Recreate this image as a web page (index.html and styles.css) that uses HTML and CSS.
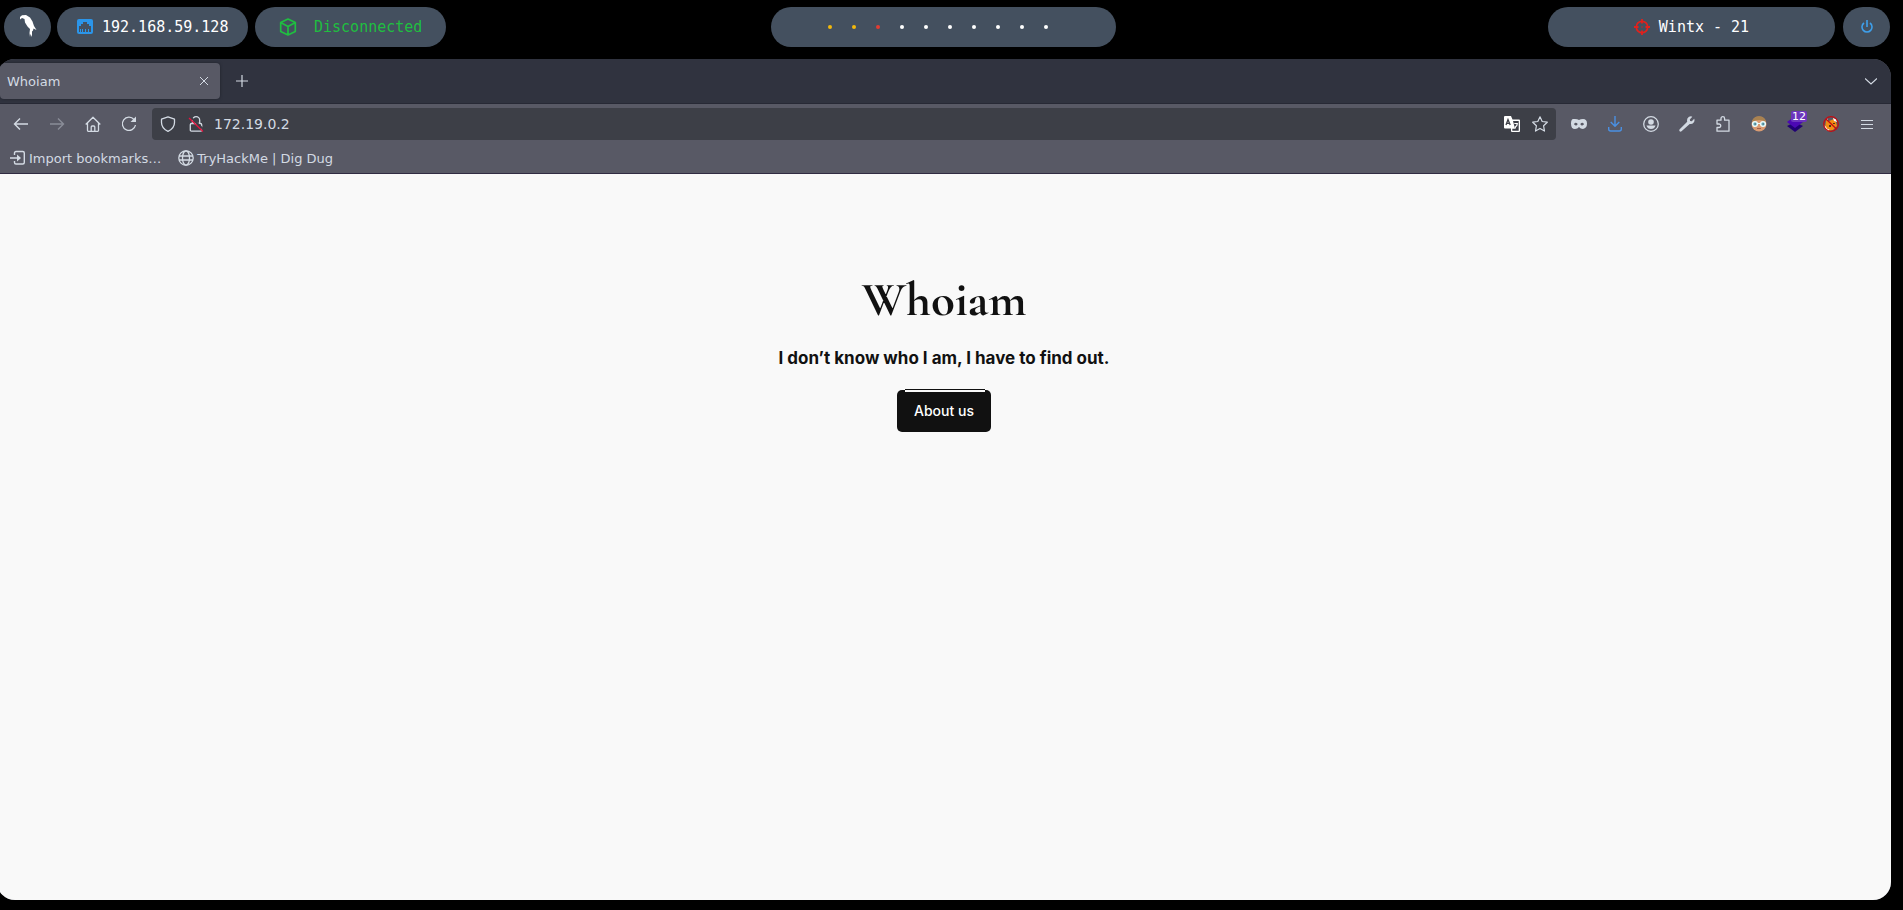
FILE: index.html
```html
<!DOCTYPE html>
<html lang="en">
<head>
<meta charset="utf-8">
<title>Whoiam</title>
<link rel="stylesheet" href="styles.css">
</head>
<body>
<header class="panel">
  <div class="panel-group">
    <button class="pill pill-round" aria-label="Menu">
      <svg width="18" height="26" viewBox="0 0 18 26"><path fill="#fff" d="M1 5.500V3l2-1.700L7 1l4 2.500 2.500 4 1.500 4.500 2.500 4-3-1.500-.5 2-1 1v5.500l-1.500-3-.5 3-.5-4 .5-4-2.500-2.500L6 8.500 5.500 5 3 4z"/></svg>
    </button>
    <div class="pill pill-left">
      <svg width="16" height="16" viewBox="0 0 16 16"><rect width="16" height="15" rx="2" fill="#2b95e9"/><path fill="#44505f" d="M2 13V7h2V5h2V3h4v2h2v2h2v6h-2v-3h-1v3H9v-3H8v3H6v-3H5v3H4v-3H3v3z"/></svg>
      <span>192.168.59.128</span>
    </div>
    <div class="pill pill-left pill-vpn">
      <svg width="18" height="18" viewBox="0 0 18 18" fill="none" stroke="currentColor" stroke-width="1.700" stroke-linejoin="round"><path d="M9 1l7.300 3.500v9L9 17l-7.300-3.500v-9zM1.700 4.500L9 8.500l7.300-4M9 8.500V17"/></svg>
      <span>Disconnected</span>
    </div>
  </div>
  <div class="pill pill-dots">
    <i class="dot dot-yellow"></i><i class="dot dot-yellow"></i><i class="dot dot-red"></i><i class="dot"></i><i class="dot"></i><i class="dot"></i><i class="dot"></i><i class="dot"></i><i class="dot"></i><i class="dot"></i>
  </div>
  <div class="panel-group panel-end">
    <div class="pill pill-target">
      <svg width="16" height="16" viewBox="0 0 16 16" fill="none" stroke="#e2211c"><circle cx="8" cy="8" r="5.700" stroke-width="1.700"/><path stroke-width="1.800" d="M8 0v4.500M8 11.500V16M0 8h4.500M11.500 8H16"/><circle cx="8" cy="8" r=".3"/></svg>
      <span>Wintx - 21</span>
    </div>
    <button class="pill pill-round" aria-label="Power">
      <svg width="12" height="14" viewBox="0 0 12 14" fill="none" stroke="#3e9fea" stroke-width="1.600"><path d="M6 0v7M3 3a5 5 0 1 0 6 0"/></svg>
    </button>
  </div>
</header>

<div class="window">
  <div class="tabbar">
    <div class="tab">
      <span>Whoiam</span>
      <button class="icon-btn tab-close" aria-label="Close tab"><svg width="8" height="8" viewBox="0 0 8 8" fill="none" stroke="currentColor"><path d="M0 0l8 8M8 0L0 8"/></svg></button>
    </div>
    <button class="icon-btn" aria-label="New tab"><svg width="12" height="12" viewBox="0 0 12 12" fill="none" stroke="currentColor" stroke-width="1.200"><path d="M6 0v12M0 6h12"/></svg></button>
    <button class="icon-btn tab-list" aria-label="List all tabs"><svg width="12" height="7" viewBox="0 0 12 7" fill="none" stroke="currentColor" stroke-width="1.200"><path d="M0 .5l6 5.500 6-5.500"/></svg></button>
  </div>

  <nav class="toolbar">
    <button class="icon-btn" aria-label="Back"><svg width="16" height="16" viewBox="0 0 16 16" fill="none" stroke="currentColor" stroke-width="1.400"><path d="M15 8H2M7 2.500L1.500 8 7 13.500"/></svg></button>
    <button class="icon-btn faded" aria-label="Forward"><svg width="16" height="16" viewBox="0 0 16 16" fill="none" stroke="currentColor" stroke-width="1.400"><path d="M1 8h13M9 2.500L14.500 8 9 13.500"/></svg></button>
    <button class="icon-btn" aria-label="Home"><svg width="16" height="16" viewBox="0 0 16 16" fill="none" stroke="currentColor" stroke-width="1.300" stroke-linejoin="round"><path d="M.7 8.500L8 1.300l7.300 7.200M2.500 7v7.500q0 .8.800.8h9.400q.8 0 .8-.8V7M6.200 15v-4q0-1 1-1h1.600q1 0 1 1v4"/></svg></button>
    <button class="icon-btn" aria-label="Reload"><svg width="16" height="16" viewBox="0 0 16 16"><path fill="none" stroke="currentColor" stroke-width="1.300" d="M13 3.500A6.600 6.600 0 1 0 14.500 9"/><path fill="currentColor" d="M15 .5V6H9.500z"/></svg></button>
    <div class="urlbar">
      <svg class="shield" width="16" height="16" viewBox="0 0 16 16" fill="none" stroke="currentColor" stroke-width="1.300" stroke-linejoin="round"><path d="M8 .9l6.500 2.300v3.300q0 5.800-6.500 8.800-6.500-3-6.500-8.800V3.200z"/></svg>
      <svg class="lock" width="16" height="16" viewBox="0 0 16 16" fill="none" stroke="currentColor" stroke-width="1.300"><path d="M4.500 7V4.300a3.600 3.600 0 0 1 7.200 0V7M3.500 7.500h9q1.200 0 1.200 1.200v5.300q0 1.200-1.200 1.200h-9q-1.200 0-1.200-1.200V8.700q0-1.200 1.200-1.200z"/><path stroke="#3d3f47" stroke-width="2" d="M2 .5L16 14"/><path stroke="#e5133f" d="M1 2l14 13.500"/></svg>
      <input class="address" type="text" value="172.19.0.2" aria-label="Address">
      <button class="icon-btn url-btn" aria-label="Translate"><svg width="16" height="16" viewBox="0 0 16 16"><path fill="#fff" d="M1 0h6l1.500 3.500H15q1 0 1 1V15q0 1-1 1H8q-1 0-1-1v-2.500H1q-1 0-1-1V1q0-1 1-1z"/><path fill="#3d3f47" d="M9 5h5.700v9.700H8.300v-2H11z"/><path fill="none" stroke="#3d3f47" stroke-width="1.300" d="M2 9l2-5.500L6.200 9M2.800 7.300h2.500"/><path fill="none" stroke="#fff" stroke-width="1.200" d="M10.300 7.500h3q0 2.500-2 3.500v1.500"/></svg></button>
      <button class="icon-btn url-btn" aria-label="Bookmark this page"><svg width="16" height="16" viewBox="0 0 16 16" fill="none" stroke="currentColor" stroke-width="1.200" stroke-linejoin="round"><path d="M8 .8l2.200 4.700 5.100.7-3.700 3.600.9 5.300L8 12.600l-4.500 2.500.9-5.300L.7 6.200l5.100-.7z"/></svg></button>
    </div>
    <button class="icon-btn" aria-label="Private mask"><svg width="16" height="10" viewBox="0 0 16 10"><path fill="currentColor" fill-rule="evenodd" d="M4 0q2.500 0 4 1 1.500-1 4-1 4 0 4 4.500T12 10q-2.500 0-4-2-1.500 2-4 2-4 0-4-5.500T4 0zM3 5.200q1 1.300 2 1.300t1.700-1.500q-1-1.200-2-1.200T3 5.200zm6.300-.2q.7 1.500 1.700 1.500t2-1.300q-.7-1.400-1.700-1.400t-2 1.200z"/></svg></button>
    <button class="icon-btn download" aria-label="Downloads"><svg width="14" height="16" viewBox="0 0 14 16" fill="none" stroke="currentColor" stroke-width="1.400"><path d="M7 0v10M2.700 6L7 10.300 11.300 6M.7 11v2q0 2 2 2h8.600q2 0 2-2v-2"/></svg></button>
    <button class="icon-btn" aria-label="Account"><svg width="16" height="16" viewBox="0 0 16 16"><circle cx="8" cy="8" r="7.300" fill="none" stroke="currentColor" stroke-width="1.300"/><circle cx="8" cy="6" r="2.800" fill="currentColor"/><path fill="currentColor" d="M3.500 9.500h9q-1 3.500-4.500 3.500T3.500 9.500z"/></svg></button>
    <button class="icon-btn" aria-label="Developer tools"><svg width="16" height="16" viewBox="0 0 16 16"><path fill="currentColor" d="M10 .8Q12 0 13.300.7L10.800 3.500l.3 1.600 1.700.2 2.400-2.500q.8 1.900-.5 3.700-1.500 2-4 1.500L2.500 15.300q-1 .7-1.900-.1-.7-.9.100-1.900L8.200 5.700Q7.400 2.200 10 .8z"/></svg></button>
    <button class="icon-btn" aria-label="Extensions"><svg width="16" height="16" viewBox="0 0 16 16" fill="none" stroke="currentColor" stroke-width="1.300" stroke-linejoin="round"><path d="M2 7V4.200h4V2.500a1.800 1.800 0 0 1 3.600 0v1.700H14v11H2V11.500h2A1.700 1.700 0 0 0 4 8H2z"/></svg></button>
    <button class="icon-btn" aria-label="Profile extension"><svg width="16" height="16" viewBox="0 0 16 16"><circle cx="8" cy="8" r="7.500" fill="#d99b72"/><path fill="#a98250" d="M.8 6Q2 .2 8 .2T15.200 6q-3-2-7-2t-7.400 2z"/><g fill="#75bac5" stroke="#eefafa" stroke-width="1.300"><circle cx="4" cy="8" r="2.400"/><circle cx="12" cy="8" r="2.400"/></g><path stroke="#eefafa" d="M6 7.500h4"/><path stroke="#315568" d="M3.500 8h1.500M11.500 8H13"/><path stroke="#a55c49" d="M6 12.500h4"/></svg></button>
    <button class="icon-btn" aria-label="Layers extension, 12"><svg width="16" height="16" viewBox="0 0 16 16"><path fill="#210075" d="M0 10l8-4 8 4-8 6z"/><path fill="#4c08b5" d="M0 6l8-6 8 6-8 6z"/></svg><span class="count">12</span></button>
    <button class="icon-btn" aria-label="Proxy extension"><svg width="16" height="16" viewBox="0 0 16 16"><path fill="#f28c13" d="M3 4l3 1 5-2 2 3 1 4-4 4-5 1-3-3z"/><path fill="#fff" d="M10 2l3 1 1 3-3-1zM1.500 9l3 4 2 .5-1 1.500q-3-1-4-4zM2 4l2-2 1 2z"/><path fill="#54301c" d="M6 9h2v2H6zM10 7h2v1h-2z"/><g fill="none" stroke="#c40c12" stroke-width="1.300"><circle cx="8" cy="8" r="7.300"/><path d="M3 3l10.500 10"/></g></svg></button>
    <button class="icon-btn" aria-label="Application menu"><svg width="12" height="11" viewBox="0 0 12 11" stroke="currentColor" stroke-width="1.200"><path d="M0 1.500h12M0 5.500h12M0 9.500h12"/></svg></button>
  </nav>

  <div class="bookmarks">
    <a class="bookmark" href="#"><svg width="16" height="16" viewBox="0 0 16 16" fill="none" stroke="currentColor" stroke-width="1.400"><path d="M4.500 5V3q0-1.500 1.500-1.500h6.800q1.500 0 1.500 1.500v9.500q0 1.500-1.500 1.500H6q-1.500 0-1.500-1.500V11M0 8h9"/><path fill="currentColor" stroke="none" d="M7 4.500l4 3.500-4 3.500z"/></svg><span>Import bookmarks…</span></a>
    <a class="bookmark" href="#"><svg width="16" height="16" viewBox="0 0 16 16" fill="none" stroke="currentColor" stroke-width="1.300"><circle cx="8" cy="8" r="7.200"/><ellipse cx="8" cy="8" rx="3.500" ry="7.200"/><path d="M1 6h14M1 10h14"/></svg><span>TryHackMe | Dig Dug</span></a>
  </div>

  <main class="page">
    <h1>Whoiam</h1>
    <p class="tagline">I don’t know who I am, I have to find out.</p>
    <a class="about" href="#">About us</a>
  </main>
</div>
</body>
</html>
```
FILE: styles.css
```css
* { box-sizing: border-box; }

body {
  margin: 0;
  min-height: 100vh;
  display: flex;
  flex-direction: column;
  background: #000;
  overflow-x: hidden;
  font-family: "DejaVu Sans", sans-serif;
  font-size: 13px;
  color: #d3dae3;
}

button { font: inherit; color: inherit; border: 0; padding: 0; background: none; }
svg { display: block; flex: none; }

/* Desktop panel */
.panel {
  display: grid;
  grid-template-columns: 99fr 345px 100fr;
  padding: 7px 13px 12px 4px;
  font-family: "DejaVu Sans Mono", monospace;
  font-size: 15px;
  color: #fff;
}
.panel-group { display: flex; }
.panel-end { justify-content: flex-end; gap: 8px; }
.pill {
  height: 40px;
  display: flex;
  align-items: center;
  justify-content: center;
  border-radius: 20px;
  background: #44505f;
}
.pill-round { width: 47px; }
.pill-left { width: 191px; margin-left: 6px; padding-left: 20px; justify-content: flex-start; gap: 9px; }
.pill-vpn { margin-left: 7px; padding-left: 24px; gap: 17px; color: #1fbf40; }
.pill-dots { gap: 20px; padding-right: 11px; }
.pill-target { width: 287px; gap: 9px; }
.dot { width: 4px; height: 4px; border-radius: 2px; background: #fff; }
.dot-yellow { background: #f4b90b; }
.dot-red { background: #e23c32; }

/* Browser window */
.window {
  flex: 1;
  display: flex;
  flex-direction: column;
  margin: 0 12px 10px -3px;
  border-radius: 18px;
  overflow: hidden;
  background: #585965;
}
.tabbar {
  height: 45px;
  display: flex;
  align-items: center;
  padding: 0 2px 0 3px;
  background: #30333f;
  border-bottom: 1px solid #272935;
}
.tab {
  width: 220px;
  height: 36px;
  display: flex;
  align-items: center;
  justify-content: space-between;
  margin-right: 4px;
  padding-left: 7px;
  border-radius: 4px;
  background: #585965;
  box-shadow: 0 0 3px #1e202a;
}
.icon-btn {
  position: relative;
  width: 36px;
  height: 32px;
  display: flex;
  align-items: center;
  justify-content: center;
}
.tab-close { width: 32px; }
.tab-list { margin-left: auto; }
.toolbar {
  display: flex;
  align-items: center;
  padding: 4px 6px;
}
.faded { opacity: .4; }
.download { color: #4a90e2; }
.urlbar {
  flex: 1;
  height: 32px;
  display: flex;
  align-items: center;
  margin: 0 5px;
  padding: 0 2px 0 8px;
  border-radius: 4px;
  background: #3d3f47;
}
.lock { margin: 0 10px 0 12px; }
.address {
  flex: 1;
  min-width: 0;
  border: 0;
  padding: 0;
  outline: 0;
  background: none;
  color: inherit;
  font: inherit;
  font-size: 14px;
}
.url-btn { width: 28px; }
.count {
  position: absolute;
  top: 3px;
  right: 6px;
  padding: 0 1px;
  border-radius: 2px;
  background: #6c35bd;
  color: #fff;
  font-size: 11px;
  line-height: 11px;
}
.bookmarks {
  height: 30px;
  display: flex;
  gap: 17px;
  padding: 2px 13px 0;
  border-bottom: 1px solid #302b42;
}
.bookmark {
  height: 24px;
  display: flex;
  align-items: center;
  gap: 3px;
  color: inherit;
  text-decoration: none;
}

/* Page content */
.page {
  flex: 1;
  display: flex;
  flex-direction: column;
  align-items: center;
  padding-top: 100px;
  background: #f9f9f9;
  color: #111;
  font-family: Inter, sans-serif;
}
h1 {
  margin: 0 0 20px;
  font-family: "Cormorant Garamond", "Liberation Serif", serif;
  font-size: 49px;
  line-height: 52px;
  font-weight: 700;
}
.tagline {
  margin: 0 0 20px;
  font-size: 17px;
  line-height: 24px;
  font-weight: 700;
}
.about {
  position: relative;
  padding: 10px 17px;
  border-radius: 5px;
  background: #111;
  color: #fff;
  font-size: 14px;
  line-height: 22px;
  font-weight: 500;
  text-decoration: none;
}
/* hairline highlight along the button's top edge */
.about::before {
  content: "";
  position: absolute;
  top: -1px;
  left: 8px;
  right: 6px;
  height: 2px;
  background: #f9f9f9;
  border-top: 1px solid #111;
}
```
